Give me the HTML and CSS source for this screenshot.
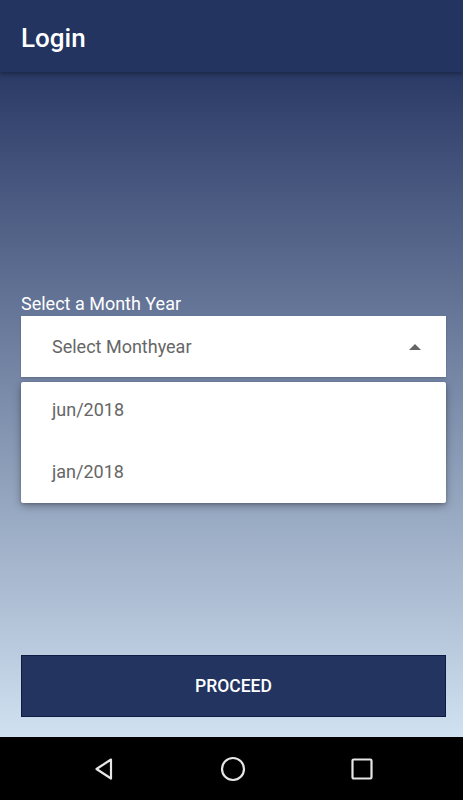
FILE: index.html
```html
<!DOCTYPE html>
<html>
<head>
<meta charset="utf-8">
<link rel="stylesheet" href="styles.css">
</head>
<body>
<div class="screen">
  <header class="appbar"><h1 class="title">Login</h1></header>
  <main class="content">
    <label class="label">Select a Month Year</label>
    <div class="select-wrap">
      <div class="select">
        <span class="placeholder">Select Monthyear</span>
        <span class="arrow"></span>
      </div>
      <ul class="menu">
        <li class="item">jun/2018</li>
        <li class="item">jan/2018</li>
      </ul>
    </div>
    <button class="proceed">PROCEED</button>
  </main>
  <nav class="navbar">
    <svg class="nav-icon" width="24" height="24" viewBox="0 0 24 24"><path d="M19 2.5 L4.5 12 L19 21.5 Z" fill="none" stroke="#e6e6e6" stroke-width="2.2" stroke-linejoin="round"/></svg>
    <svg class="nav-icon" width="26" height="26" viewBox="0 0 26 26"><circle cx="13" cy="13" r="11" fill="none" stroke="#e6e6e6" stroke-width="2.2"/></svg>
    <svg class="nav-icon" width="24" height="24" viewBox="0 0 24 24"><rect x="2.5" y="2.5" width="19" height="19" rx="1.2" fill="none" stroke="#e6e6e6" stroke-width="2.2"/></svg>
  </nav>
</div>
</body>
</html>
```
FILE: styles.css
```css
* { box-sizing: border-box; }
html, body { margin: 0; padding: 0; }
body { font-family: Roboto, "Noto Sans", sans-serif; }
.screen { width: 463px; height: 800px; display: flex; flex-direction: column; overflow: hidden; }
.appbar {
  height: 72px; flex: 0 0 72px; background: #22345f;
  display: flex; align-items: center; padding: 4px 0 0 21px;
  box-shadow: 0 2px 5px rgba(0,0,0,0.35); position: relative; z-index: 2;
}
.title { margin: 0; color: #fff; font-size: 26px; font-weight: 500; letter-spacing: 0; line-height: 30px; }
.content {
  flex: 1; display: flex; flex-direction: column;
  background: linear-gradient(to bottom, #2a3a66 0%, #d0e1f1 100%);
  padding: 221px 17px 20px 21px;
}
.label { color: #fff; font-size: 18px; line-height: 21px; height: 21px; }
.select-wrap { position: relative; margin-top: 2px; }
.select {
  height: 61px; background: #fff; display: flex; align-items: center;
  justify-content: space-between; padding: 0 25px 0 31px;
  box-shadow: 0 1px 2px rgba(0,0,0,0.2);
}
.placeholder { color: #666; font-size: 18px; }
.arrow { width: 0; height: 0; border-left: 6px solid transparent; border-right: 6px solid transparent; border-bottom: 6px solid #666; }
.menu {
  position: absolute; left: 0; right: 0; top: 66px; margin: 0; padding: 0; list-style: none;
  background: #fff; height: 121px; box-shadow: 0 3px 8px rgba(0,0,0,0.3), 0 1px 3px rgba(0,0,0,0.2);
  border-radius: 2px; z-index: 3;
}
.item { height: 62px; line-height: 56px; padding-left: 31px; color: #666; font-size: 18px; }
.proceed {
  margin-top: auto; height: 62px; width: 100%; background: #22345f; border: 1px solid #0e1b44;
  color: #fff; font-family: Roboto, sans-serif; font-weight: 500; font-size: 17.5px; letter-spacing: 0;
}
.navbar {
  height: 63px; flex: 0 0 63px; background: #000; display: flex; align-items: center;
  justify-content: space-between; padding: 0 89px 0 92px;
}
.nav-icon { display: block; }
```
